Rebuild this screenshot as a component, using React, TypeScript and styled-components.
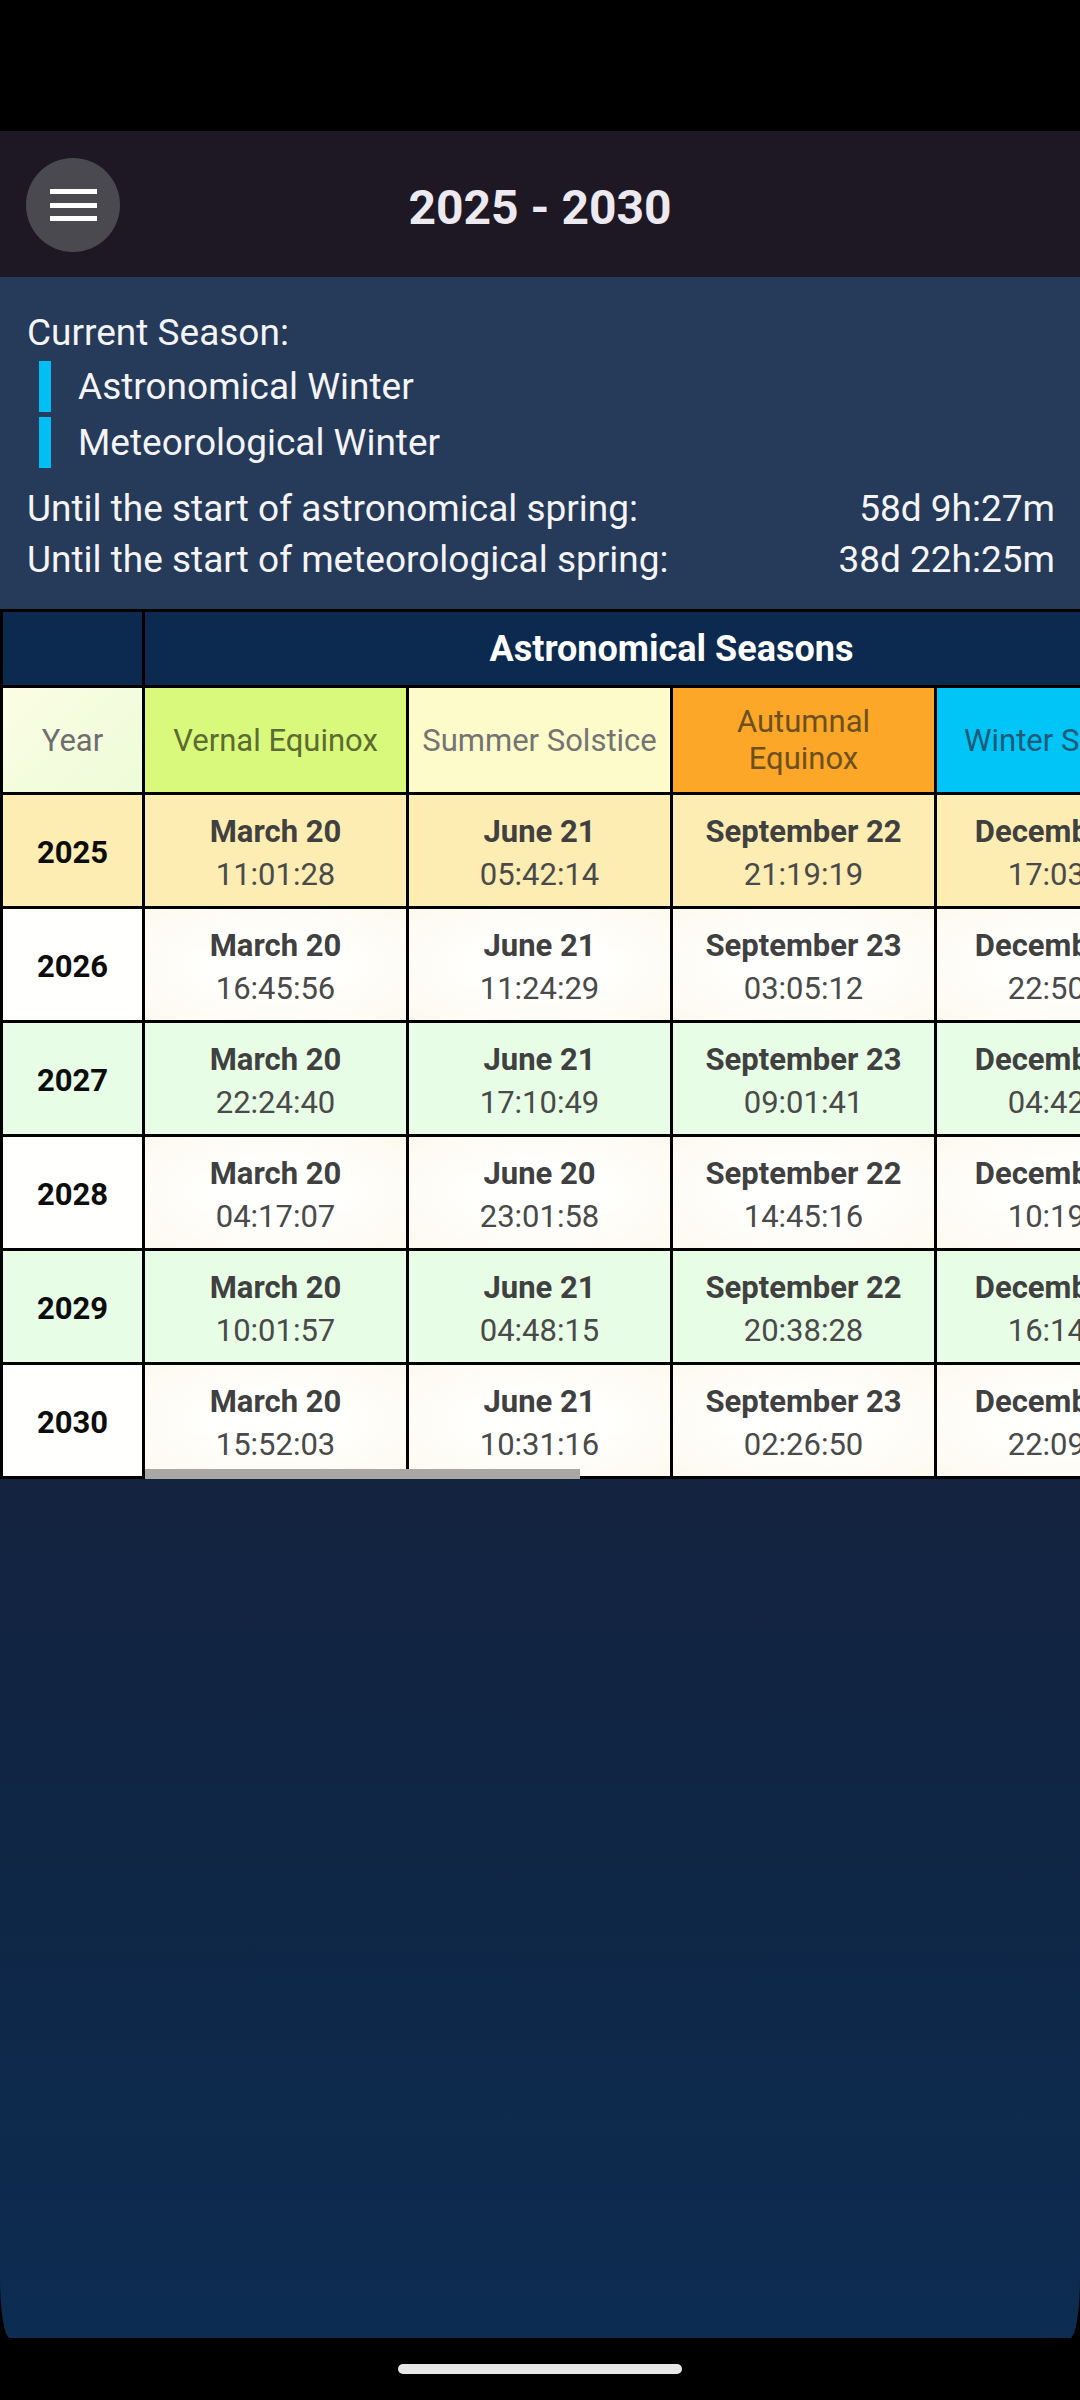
import React from "react";
import styled, { createGlobalStyle } from "styled-components";

const GlobalStyle = createGlobalStyle`
  html, body {
    margin: 0;
    padding: 0;
    background: #000;
  }
  body {
    font-family: Roboto, "Noto Sans", "Liberation Sans", sans-serif;
  }
  * {
    box-sizing: border-box;
  }
`;

const Screen = styled.div`
  width: 1080px;
  height: 2400px;
  display: flex;
  flex-direction: column;
  background: #000;
  overflow: hidden;
`;

const StatusBar = styled.div`
  height: 131px;
  flex-shrink: 0;
  background: #000;
`;

const TopBar = styled.header`
  height: 146px;
  flex-shrink: 0;
  background: #1d1824;
  display: grid;
  grid-template-columns: 1fr auto 1fr;
  align-items: center;
  padding: 0 26px;
`;

const MenuButton = styled.button`
  justify-self: start;
  width: 94px;
  height: 94px;
  border-radius: 50%;
  border: none;
  padding: 0;
  margin-top: 2px;
  background: #4a4950;
  display: flex;
  flex-direction: column;
  align-items: center;
  justify-content: center;
  gap: 8.5px;

  span {
    display: block;
    width: 47px;
    height: 5px;
    background: #fff;
  }
`;

const Title = styled.h1`
  margin: 0;
  padding-top: 7px;
  font-size: 48px;
  line-height: 48px;
  font-weight: 700;
  color: #ece9f0;
`;

const Info = styled.section`
  flex-shrink: 0;
  background: #263a5a;
  padding: 32px 25px 24px 27px;
  color: #f4f4f6;
  font-size: 37px;
`;

const Label = styled.div`
  line-height: 48px;
`;

const SeasonList = styled.div`
  display: flex;
  flex-direction: column;
  gap: 5px;
  margin-top: 4px;
  padding-left: 12px;
`;

const SeasonItem = styled.div`
  display: flex;
  align-items: center;
  height: 51px;
  gap: 27px;

  &::before {
    content: "";
    width: 12px;
    align-self: stretch;
    background: #00bff4;
  }
`;

const Countdowns = styled.div`
  margin-top: 15px;
`;

const CountdownRow = styled.div`
  display: flex;
  justify-content: space-between;
  line-height: 51px;
`;

const TableViewport = styled.div`
  position: relative;
  width: 1080px;
  flex-shrink: 0;
  overflow: hidden;
`;

const Grid = styled.div`
  display: grid;
  width: max-content;
  grid-template-columns: 139px repeat(4, 261px);
  grid-template-rows: 73px 104px repeat(6, 111px);
  gap: 3px;
  padding: 3px;
  background: #000;
`;

const GroupHead = styled.div<{ $span?: number }>`
  grid-column: span ${(p) => p.$span ?? 1};
  background: #0c2a4f;
  color: #fff;
  font-size: 36px;
  font-weight: 700;
  display: flex;
  align-items: center;
  justify-content: center;
`;

const ColumnHead = styled.div<{ $bg: string; $fg: string }>`
  background: ${(p) => p.$bg};
  color: ${(p) => p.$fg};
  font-size: 31px;
  line-height: 37px;
  text-align: center;
  padding: 0 8px;
  display: flex;
  align-items: center;
  justify-content: center;
`;

type Tone = "gold" | "cream" | "green";

const toneBg: Record<Tone, string> = {
  gold: "#fdedb2",
  cream: "radial-gradient(ellipse at center, #fffffd 35%, #fcf9ee 100%)",
  green: "#e7fde5",
};

const YearCell = styled.div<{ $tone: Tone }>`
  background: ${(p) => (p.$tone === "cream" ? "#fffffe" : toneBg[p.$tone])};
  color: #0d0d0d;
  font-size: 31px;
  font-weight: 700;
  display: flex;
  align-items: center;
  justify-content: center;
  padding-top: 4px;
`;

const DateCell = styled.div<{ $tone: Tone }>`
  background: ${(p) => toneBg[p.$tone]};
  display: flex;
  flex-direction: column;
  align-items: center;
  justify-content: center;
  padding-top: 5px;
  font-size: 31px;
  line-height: 43px;
  white-space: nowrap;
`;

const DateText = styled.div`
  font-weight: 700;
  color: #404040;
`;

const TimeText = styled.div`
  color: #4a4a4a;
`;

const ScrollThumb = styled.div`
  position: absolute;
  left: 145px;
  bottom: 0;
  width: 435px;
  height: 10px;
  background: #aaa8a5;
`;

const Backdrop = styled.div`
  flex: 1;
  background: linear-gradient(180deg, #13233f 0%, #0f2747 50%, #0c2c51 100%);
  border-bottom-left-radius: 10px 60px;
  border-bottom-right-radius: 10px 60px;
`;

const NavBar = styled.div`
  height: 62px;
  flex-shrink: 0;
  background: #000;
  display: flex;
  justify-content: center;
  padding-top: 26px;
`;

const HomePill = styled.div`
  width: 284px;
  height: 10px;
  border-radius: 5px;
  background: #e8e8e8;
`;

const columns = [
  { name: "Vernal Equinox", bg: "#d8f97b", fg: "#5c6b32" },
  { name: "Summer Solstice", bg: "#fdfbca", fg: "#747474" },
  { name: "Autumnal Equinox", bg: "#fca727", fg: "#6e5020" },
  { name: "Winter Solstice", bg: "#00c5f6", fg: "#1d5b79" },
];

const rows: { year: number; tone: Tone; cells: [string, string][] }[] = [
  {
    year: 2025,
    tone: "gold",
    cells: [
      ["March 20", "11:01:28"],
      ["June 21", "05:42:14"],
      ["September 22", "21:19:19"],
      ["December 21", "17:03:05"],
    ],
  },
  {
    year: 2026,
    tone: "cream",
    cells: [
      ["March 20", "16:45:56"],
      ["June 21", "11:24:29"],
      ["September 23", "03:05:12"],
      ["December 21", "22:50:08"],
    ],
  },
  {
    year: 2027,
    tone: "green",
    cells: [
      ["March 20", "22:24:40"],
      ["June 21", "17:10:49"],
      ["September 23", "09:01:41"],
      ["December 22", "04:42:12"],
    ],
  },
  {
    year: 2028,
    tone: "cream",
    cells: [
      ["March 20", "04:17:07"],
      ["June 20", "23:01:58"],
      ["September 22", "14:45:16"],
      ["December 21", "10:19:36"],
    ],
  },
  {
    year: 2029,
    tone: "green",
    cells: [
      ["March 20", "10:01:57"],
      ["June 21", "04:48:15"],
      ["September 22", "20:38:28"],
      ["December 21", "16:14:05"],
    ],
  },
  {
    year: 2030,
    tone: "cream",
    cells: [
      ["March 20", "15:52:03"],
      ["June 21", "10:31:16"],
      ["September 23", "02:26:50"],
      ["December 21", "22:09:23"],
    ],
  },
];

export default function App() {
  return (
    <Screen>
      <GlobalStyle />
      <StatusBar />
      <TopBar>
        <MenuButton aria-label="Menu">
          <span />
          <span />
          <span />
        </MenuButton>
        <Title>2025 - 2030</Title>
        <div />
      </TopBar>

      <Info>
        <Label>Current Season:</Label>
        <SeasonList>
          <SeasonItem>Astronomical Winter</SeasonItem>
          <SeasonItem>Meteorological Winter</SeasonItem>
        </SeasonList>
        <Countdowns>
          <CountdownRow>
            <span>Until the start of astronomical spring:</span>
            <span>58d 9h:27m</span>
          </CountdownRow>
          <CountdownRow>
            <span>Until the start of meteorological spring:</span>
            <span>38d 22h:25m</span>
          </CountdownRow>
        </Countdowns>
      </Info>

      <TableViewport>
        <Grid>
          <GroupHead />
          <GroupHead $span={4}>Astronomical Seasons</GroupHead>

          <ColumnHead $bg="linear-gradient(135deg, #fbfde3 0%, #eefcd9 100%)" $fg="#6e6e6e">
            Year
          </ColumnHead>
          {columns.map((c) => (
            <ColumnHead key={c.name} $bg={c.bg} $fg={c.fg}>
              {c.name}
            </ColumnHead>
          ))}

          {rows.map((r) => (
            <React.Fragment key={r.year}>
              <YearCell $tone={r.tone}>{r.year}</YearCell>
              {r.cells.map(([d, t], i) => (
                <DateCell key={i} $tone={r.tone}>
                  <DateText>{d}</DateText>
                  <TimeText>{t}</TimeText>
                </DateCell>
              ))}
            </React.Fragment>
          ))}
        </Grid>
        <ScrollThumb />
      </TableViewport>

      <Backdrop />
      <NavBar>
        <HomePill />
      </NavBar>
    </Screen>
  );
}
